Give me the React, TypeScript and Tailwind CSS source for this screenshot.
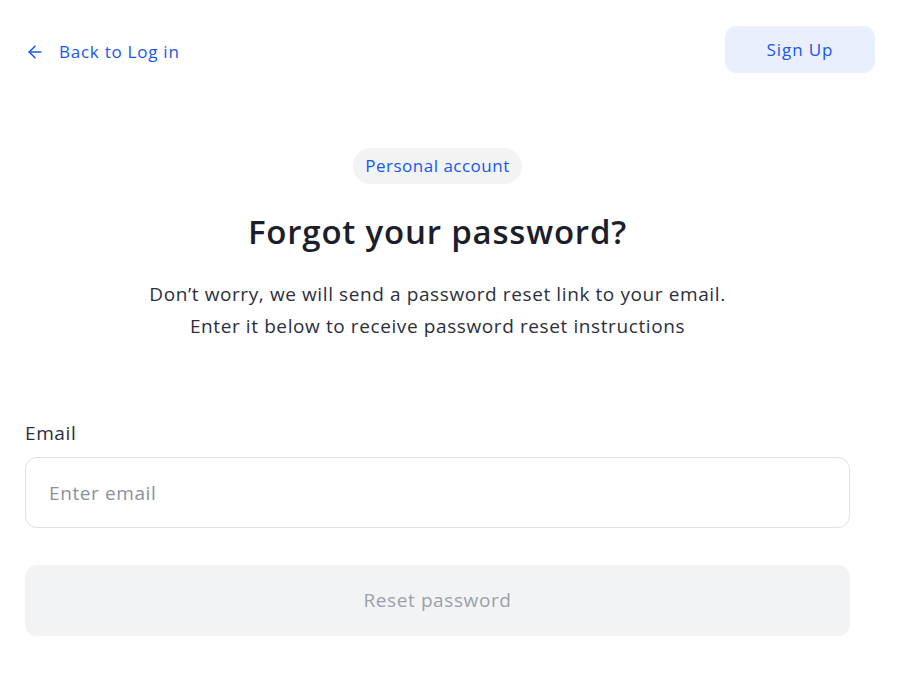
import { ArrowLeft } from "lucide-react";

export default function App() {
  return (
    <div className="min-h-screen bg-white font-['Open_Sans',sans-serif] text-[#1b1e2b]">
      <header className="flex items-center justify-between pl-[25px] pr-[30px] pt-[26px]">
        <a
          href="#"
          className="mt-[4px] flex items-center gap-[14px] text-[17px] tracking-[0.75px] text-[#1757f0]"
        >
          <ArrowLeft className="h-[20px] w-[20px]" strokeWidth={1.8} />
          <span>Back to Log in</span>
        </a>
        <button className="h-[47px] w-[150px] rounded-[12px] bg-[#e9effd] text-[17px] tracking-[0.9px] text-[#1757f0]">
          Sign Up
        </button>
      </header>

      <main className="ml-[25px] mt-[75px] flex w-[825px] flex-col items-center">
        <span className="flex h-[36px] items-center rounded-full bg-[#f2f3f5] px-[12px] text-[17px] tracking-[0.5px] text-[#1757f0]">
          Personal account
        </span>
        <h1 className="mt-[26px] text-[33px] font-semibold leading-[44px] tracking-[0.8px]">
          Forgot your password?
        </h1>
        <p className="mt-[24px] text-center text-[19px] leading-[32px] tracking-[0.6px] text-[#2b2f3d]">
          Don’t worry, we will send a password reset link to your email.
          <br />
          Enter it below to receive password reset instructions
        </p>

        <div className="mt-[78px] w-full">
          <label className="block text-[19px] leading-[26px] tracking-[0.6px] text-[#2b2f3d]">
            Email
          </label>
          <input
            type="email"
            placeholder="Enter email"
            className="mt-[11px] h-[71px] w-full rounded-[12px] border border-[#dfe1e5] px-[23px] text-[19px] tracking-[0.6px] text-[#2b2f3d] outline-none placeholder:text-[#8b919c]"
          />
          <button
            disabled
            className="mt-[37px] h-[71px] w-full rounded-[12px] bg-[#f2f3f5] text-[19px] tracking-[0.6px] text-[#9ba0aa]"
          >
            Reset password
          </button>
        </div>
      </main>
    </div>
  );
}
